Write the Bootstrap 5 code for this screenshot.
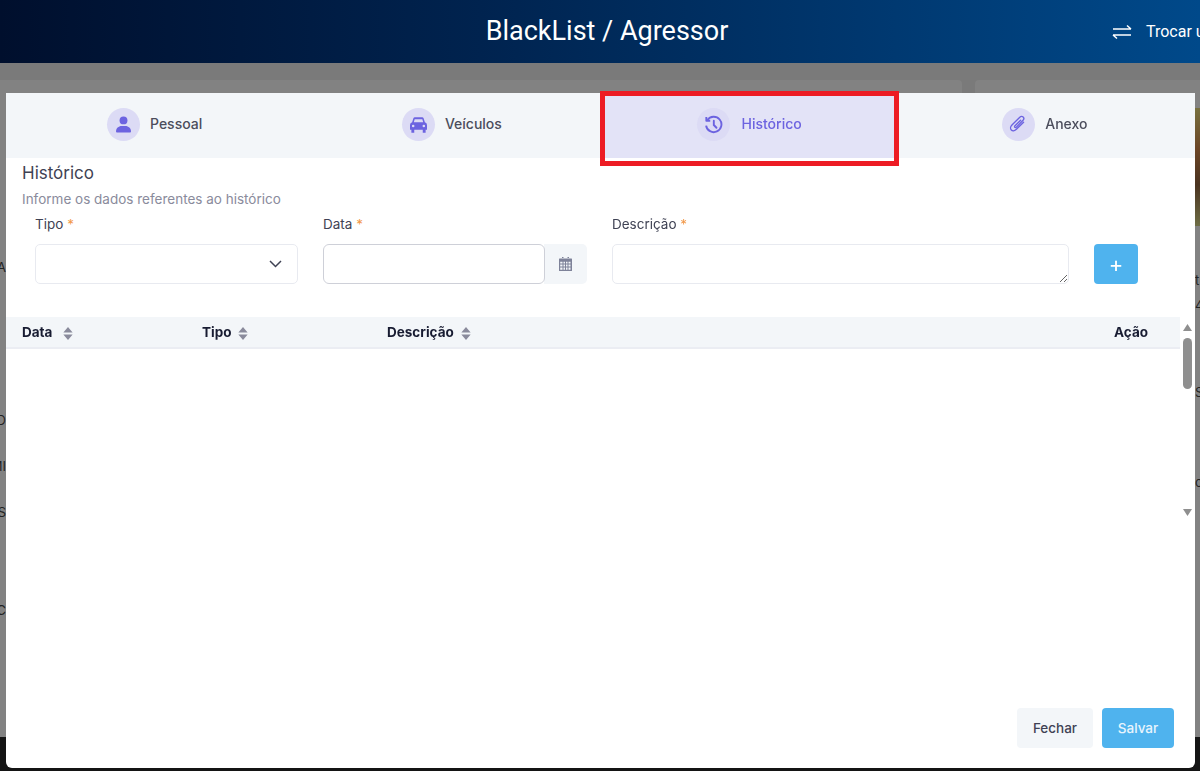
<!DOCTYPE html>
<html lang="pt-BR">
<head>
  <meta charset="UTF-8" />
  <title>BlackList / Agressor</title>
  <link href="https://cdn.jsdelivr.net/npm/bootstrap@5.3.0/dist/css/bootstrap.min.css" rel="stylesheet">
  <style>
    html, body { height: 100%; overflow: hidden; }
    body { font-family: "Inter", "Noto Sans", sans-serif; background: #7a7a7a; color: #3f4254; }
    .top-bar {
      height: 63px;
      background: linear-gradient(90deg, #000f2d 0%, #00234f 40%, #00498a 100%);
      color: #fff;
      font-family: "Roboto", sans-serif;
    }
    .top-title { font-size: 27px; padding-left: 14px; }
    .top-switch { left: 1112px; right: 0; top: 0; bottom: 0; font-size: 16px; white-space: nowrap; overflow: hidden; gap: 14px; }
    .top-switch svg { flex: none; }
    .page-back { height: calc(100vh - 63px); padding-top: 17px; gap: 13px; }
    .back-main { flex: 0 0 962px; background: #828282; border-radius: 0 4px 0 0; }
    .back-side { flex: 1; background: #828282; border-radius: 4px 0 0 0; padding-left: 220px; }
    .back-foot { height: 34px; background: #141414; }
    .back-frag { font-size: 13px; color: #222; line-height: 16px; white-space: nowrap; }
    .back-frag-left { width: 6px; direction: rtl; overflow: hidden; }
    .gap-a { margin-top: 179px; }
    .gap-b { margin-top: 137px; }
    .gap-c { margin-top: 30px; }
    .gap-d { margin-top: 82px; }
    .gap-e { margin-top: 192px; }
    .gap-f { margin-top: 9px; }
    .gap-g { margin-top: 71px; }
    .gap-h { margin-top: 74px; }
    .side-photo { top: 108px; right: 0; width: 5px; height: 118px; background: linear-gradient(180deg, #77703f, #6b4526 35%, #4a3320 65%, #6e6d45); }

    .sheet { top: 93px; left: 6px; width: 1189px; height: 675px; background: #fff; border-radius: 0 0 6px 6px; }
    .step-bar { height: 65px; background: #f3f6f9; }
    .step-item { flex: 0 0 25%; gap: 10px; font-size: 14px; font-weight: 500; color: #4b4d5c; padding-bottom: 2px; }
    .step-item > span:last-child { margin-bottom: 2px; }
    .step-item.is-active { background: #e3e3f7; color: #6c63e0; gap: 12px; }
    .step-item.step-last { padding-right: 3px; }
    .step-dot { width: 33px; height: 33px; border-radius: 50%; background: #dcdbf5; color: #6c63e0; }
    .mark-box { left: 594px; top: -2px; width: 299px; height: 75px; border: 5px solid #ed1c24; pointer-events: none; }
    .sheet-title { font-size: 17px; line-height: 20px; color: #3f4254; padding: 5px 16px 0; }
    .sheet-sub { font-size: 13.500px; line-height: 18px; color: #8a8b9c; padding: 7px 16px 0; }
    .form-line { padding: 7px 57px 0 29px; gap: 25px; }
    .field-label { font-size: 13.500px; line-height: 18px; margin-bottom: 11px; color: #3f4254; }
    .req { color: #f2994a; }
    .col-tipo { flex: 0 0 263px; }
    .col-data { flex: 0 0 264px; }
    .col-desc { flex: 0 0 457px; }
    .form-select.slim, .form-control.slim { height: 40px; border-color: #e8eaf0; border-radius: 5px; box-shadow: none; }
    .form-select.slim { background-image: none; }
    .form-control.slim-strong { border-color: #ced0d8; }
    .select-wrap svg { right: 16px; top: 16px; }
    .addon-cal { flex: none; width: 43px; background: #f3f6f9; border: 0; border-radius: 0 5px 5px 0; color: #7e8299; }
    .add-btn { width: 44px; height: 40px; margin-top: 29px; background: #4fb3ee; color: #fff; border: 0; border-radius: 4px; font-size: 22px; line-height: 1; padding: 0; }
    .table-area { margin-top: 33px; height: 206px; }
    .grid-scroll { flex: 1; }
    .grid-head { height: 32px; background: #f3f6f9; border-bottom: 2px solid #ebedf3; font-size: 13.500px; font-weight: 700; color: #181c32; padding: 0 32px 0 16px; }
    .gh-data { width: 180px; }
    .gh-tipo { width: 185px; }
    .sort-ico { margin-left: 7px; color: #8a8b9c; }
    .gh-data .sort-ico { margin-left: 11px; }
    .fake-bar { flex: 0 0 15px; padding: 3px 0; }
    .fake-thumb { width: 9px; height: 51px; border-radius: 5px; background: #8f8f8f; margin: 7px auto 0; }
    .fake-arrow { color: #8f8f8f; }
    .sheet-foot { right: 21px; bottom: 20px; gap: 9px; }
    .foot-btn { height: 40px; font-size: 13.500px; font-weight: 500; border: 0; border-radius: 4px; padding: 0; }
    .foot-close { width: 76px; background: #f3f6f9; color: #3f4254; }
    .foot-save { width: 72px; background: #4fb3ee; color: #e8f5fd; }
  </style>
</head>
<body>
  <nav class="top-bar position-relative d-flex align-items-center justify-content-center">
    <div class="top-title">BlackList / Agressor</div>
    <div class="top-switch position-absolute d-flex align-items-center">
      <svg width="20" height="16" viewBox="0 0 20 16" fill="none" stroke="#fff" stroke-width="1.5"><path d="M1 5h18M15 1.500 19 5M19 11H1M5 14.500 1 11"/></svg>
      <span>Trocar usuário</span>
    </div>
  </nav>

  <!-- fundo da tela, atrás do modal -->
  <div class="page-back d-flex">
    <div class="back-main d-flex flex-column">
      <div class="back-frag back-frag-left gap-a">A</div>
      <div class="back-frag back-frag-left gap-b">D,</div>
      <div class="back-frag back-frag-left gap-c">MI</div>
      <div class="back-frag back-frag-left gap-c">US</div>
      <div class="back-frag back-frag-left gap-d">C</div>
    </div>
    <div class="back-side d-flex flex-column">
      <div class="back-frag gap-e">t</div>
      <div class="back-frag gap-f">4</div>
      <div class="back-frag gap-g">S</div>
      <div class="back-frag gap-h">o</div>
    </div>
  </div>
  <div class="back-foot position-fixed bottom-0 start-0 end-0"></div>
  <div class="side-photo position-fixed"></div>

  <div class="sheet position-fixed">
    <div class="step-bar d-flex position-relative">
      <div class="step-item d-flex align-items-center justify-content-center">
        <span class="step-dot d-flex align-items-center justify-content-center">
          <svg width="15" height="17" viewBox="0 0 16 18" fill="currentColor"><circle cx="8" cy="4.600" r="4.200"/><path d="M1 17.500c-.6 0-1-.4-1-1 0-3.400 2.700-5.800 6-5.800h4c3.300 0 6 2.400 6 5.800 0 .6-.4 1-1 1z"/></svg>
        </span>
        <span>Pessoal</span>
      </div>
      <div class="step-item d-flex align-items-center justify-content-center">
        <span class="step-dot d-flex align-items-center justify-content-center">
          <svg width="17" height="16" viewBox="0 0 16 15" fill="currentColor" fill-rule="evenodd"><path d="M3.200 1.200Q3.500.3 4.600.3h6.800q1.100 0 1.400.9L14 5q2 .6 2 2.500V12h-1.300v2.700H12V12H4v2.700H1.300V12H0V7.500Q0 5.600 2 5zM4.400 2 3.600 5h8.800l-.8-3zM3 7.300a1.200 1.200 0 1 0 0 2.400 1.200 1.200 0 0 0 0-2.400zm10 0a1.200 1.200 0 1 0 0 2.400 1.200 1.200 0 0 0 0-2.400z"/></svg>
        </span>
        <span>Veículos</span>
      </div>
      <div class="step-item is-active d-flex align-items-center justify-content-center">
        <span class="step-dot d-flex align-items-center justify-content-center">
          <svg width="19" height="19" viewBox="0 0 18 18" fill="none" stroke="currentColor" stroke-width="1.800"><path d="M3.200 4.800A7.300 7.300 0 1 1 2 10"/><path d="M2.200 1.800v3.700h3.700" stroke-linejoin="round"/><path d="M9.300 5.500v4l2.500 2.600" stroke-linecap="round"/></svg>
        </span>
        <span>Histórico</span>
      </div>
      <div class="step-item step-last d-flex align-items-center justify-content-center">
        <span class="step-dot d-flex align-items-center justify-content-center">
          <svg width="19" height="19" viewBox="0 0 18 18" fill="none" stroke="currentColor" stroke-width="1.300" stroke-linecap="round"><path d="M13.800 6.800 7 13.600c-1.500 1.500-3.700 1.700-4.800.6-1.100-1.100-.9-3.300.6-4.800L10 2.300c1-1 2.500-1.200 3.400-.4.9.9.7 2.400-.3 3.400L7 11.500c-.5.5-1.100.6-1.500.2-.4-.4-.3-1 .2-1.500L11 5"/></svg>
        </span>
        <span>Anexo</span>
      </div>
      <div class="mark-box position-absolute"></div>
    </div>

    <div class="sheet-title">Histórico</div>
    <div class="sheet-sub">Informe os dados referentes ao histórico</div>

    <div class="form-line d-flex">
      <div class="col-tipo">
        <label class="field-label d-block">Tipo <span class="req">*</span></label>
        <div class="select-wrap position-relative">
          <select class="form-select slim"></select>
          <svg class="position-absolute" width="13" height="8" viewBox="0 0 13 8" fill="none" stroke="#3f4254" stroke-width="1.500"><path d="m1 1 5.500 5.500L12 1"/></svg>
        </div>
      </div>
      <div class="col-data">
        <label class="field-label d-block">Data <span class="req">*</span></label>
        <div class="input-group">
          <input type="text" class="form-control slim slim-strong rounded-2">
          <span class="addon-cal d-flex align-items-center justify-content-center">
            <svg width="13" height="14" viewBox="0 0 13 14" fill="currentColor"><path d="M3 0h1.500v2H3zM8.500 0H10v2H8.500zM.5 1.500h12a.5.5 0 0 1 .5.5v11.500a.5.5 0 0 1-.5.5H.5a.5.5 0 0 1-.5-.5V2a.5.5 0 0 1 .5-.5zm.7 3.300v1.800h2.300V4.800zm3.300 0v1.800h1.500V4.800zm2.500 0v1.800h1.500V4.800zm2.500 0v1.800h2V4.800zm-8.300 2.800v1.800h2.300V7.600zm3.300 0v1.800h1.500V7.600zm2.500 0v1.800h1.500V7.600zm2.500 0v1.800h2V7.600zm-8.300 2.800v2.300h2.300v-2.300zm3.300 0v2.300h1.500v-2.300zm2.500 0v2.300h1.500v-2.300zm2.500 0v2.300h2v-2.300z" fill-rule="evenodd"/></svg>
          </span>
        </div>
      </div>
      <div class="col-desc">
        <label class="field-label d-block">Descrição <span class="req">*</span></label>
        <textarea class="form-control slim" rows="1"></textarea>
      </div>
      <button class="add-btn btn">+</button>
    </div>

    <div class="table-area d-flex">
      <div class="grid-scroll">
        <div class="grid-head d-flex align-items-center">
          <div class="gh-data">Data<svg class="sort-ico" width="10" height="13" viewBox="0 0 10 14" fill="currentColor"><path d="M5 0l5 6H0zM5 14 0 8h10z"/></svg></div>
          <div class="gh-tipo">Tipo<svg class="sort-ico" width="10" height="13" viewBox="0 0 10 14" fill="currentColor"><path d="M5 0l5 6H0zM5 14 0 8h10z"/></svg></div>
          <div class="flex-grow-1">Descrição<svg class="sort-ico" width="10" height="13" viewBox="0 0 10 14" fill="currentColor"><path d="M5 0l5 6H0zM5 14 0 8h10z"/></svg></div>
          <div>Ação</div>
        </div>
      </div>
      <div class="fake-bar d-flex flex-column align-items-center">
        <svg class="fake-arrow mt-1" width="9" height="7" viewBox="0 0 9 7" fill="currentColor"><path d="M4.500 0 9 7H0z"/></svg>
        <div class="fake-thumb"></div>
        <svg class="fake-arrow mt-auto mb-1" width="9" height="7" viewBox="0 0 9 7" fill="currentColor"><path d="M4.500 7 0 0h9z"/></svg>
      </div>
    </div>

    <div class="sheet-foot position-absolute d-flex">
      <button class="btn foot-btn foot-close">Fechar</button>
      <button class="btn foot-btn foot-save">Salvar</button>
    </div>
  </div>

  <script src="https://cdn.jsdelivr.net/npm/bootstrap@5.3.0/dist/js/bootstrap.bundle.min.js"></script>
</body>
</html>
